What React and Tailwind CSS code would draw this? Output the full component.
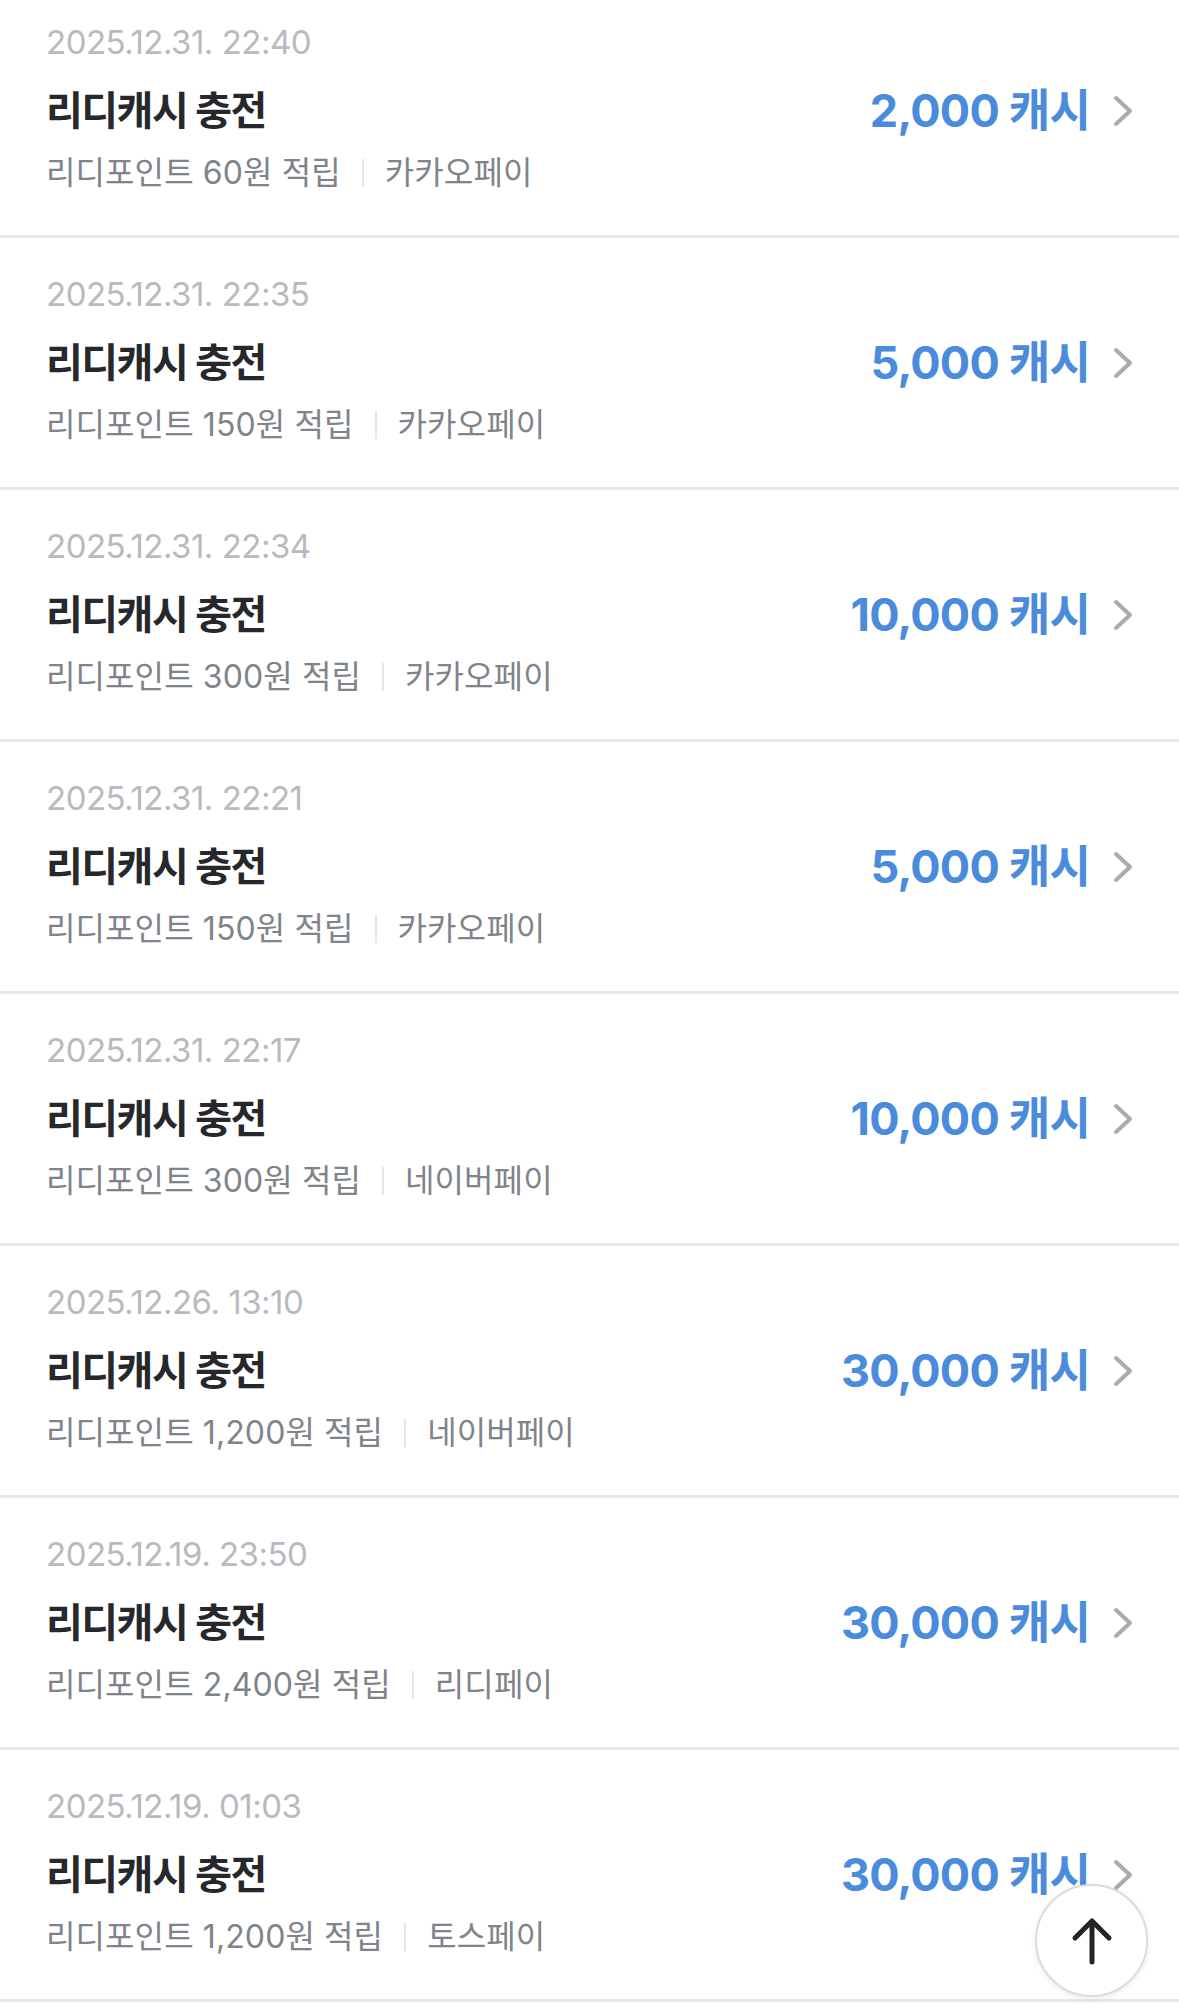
import React from 'react';

const rows = [
  { date: '2025.12.31. 22:40', point: '60', pay: '카카오페이', cash: '2,000' },
  { date: '2025.12.31. 22:35', point: '150', pay: '카카오페이', cash: '5,000' },
  { date: '2025.12.31. 22:34', point: '300', pay: '카카오페이', cash: '10,000' },
  { date: '2025.12.31. 22:21', point: '150', pay: '카카오페이', cash: '5,000' },
  { date: '2025.12.31. 22:17', point: '300', pay: '네이버페이', cash: '10,000' },
  { date: '2025.12.26. 13:10', point: '1,200', pay: '네이버페이', cash: '30,000' },
  { date: '2025.12.19. 23:50', point: '2,400', pay: '리디페이', cash: '30,000' },
  { date: '2025.12.19. 01:03', point: '1,200', pay: '토스페이', cash: '30,000' },
];

const font = { fontFamily: '"Inter", "Noto Sans CJK KR", sans-serif' };

const Chevron = () => (
  <svg width="22" height="34" viewBox="0 0 22 34" fill="none" className="shrink-0">
    <path d="M4 4 L18 17 L4 30" stroke="#a7aaaf" strokeWidth="4" strokeLinecap="round" strokeLinejoin="round" />
  </svg>
);

const HistoryRow = ({ item }) => (
  <div className="h-[252px] border-b-[3px] border-[#e8e8e8] pl-[46px] pr-[45px] pt-[36px]">
    <div className="text-[33px] leading-[40px] text-[#b7bbc0] tracking-[-0.5px]">{item.date}</div>
    <div className="flex items-center justify-between mt-[24px]">
      <div className="text-[40px] leading-[50px] font-bold text-[#26282b] tracking-[-1.5px]">리디캐시 충전</div>
      <div className="flex items-center gap-[22px]">
        <span className="text-[45px] leading-[50px] font-bold text-[#4a8bdc] tracking-[-0.8px]">{item.cash} 캐시</span>
        <Chevron />
      </div>
    </div>
    <div className="flex items-center mt-[17px] text-[32px] leading-[40px] text-[#7f838a] tracking-[0.1px]">
      <span>리디포인트 {item.point}원 적립</span>
      <span className="w-[2px] h-[28px] bg-[#e4e5e7] mx-[21px]" />
      <span>{item.pay}</span>
    </div>
  </div>
);

export default function App() {
  return (
    <div className="relative w-[1179px] h-[2007px] overflow-hidden bg-white" style={font}>
      <div className="-mt-[14px]">
        {rows.map((item, i) => (
          <HistoryRow key={i} item={item} />
        ))}
      </div>
      <button className="absolute right-[31px] bottom-[10px] w-[113px] h-[113px] rounded-full bg-white border-2 border-[#dcdcdc] shadow-[0_2px_6px_rgba(0,0,0,0.08)] flex items-center justify-center">
        <svg width="44" height="50" viewBox="0 0 44 50" fill="none">
          <path d="M22 46 V5 M5 22 L22 5 L39 22" stroke="#222428" strokeWidth="5" strokeLinecap="round" strokeLinejoin="round" />
        </svg>
      </button>
    </div>
  );
}
